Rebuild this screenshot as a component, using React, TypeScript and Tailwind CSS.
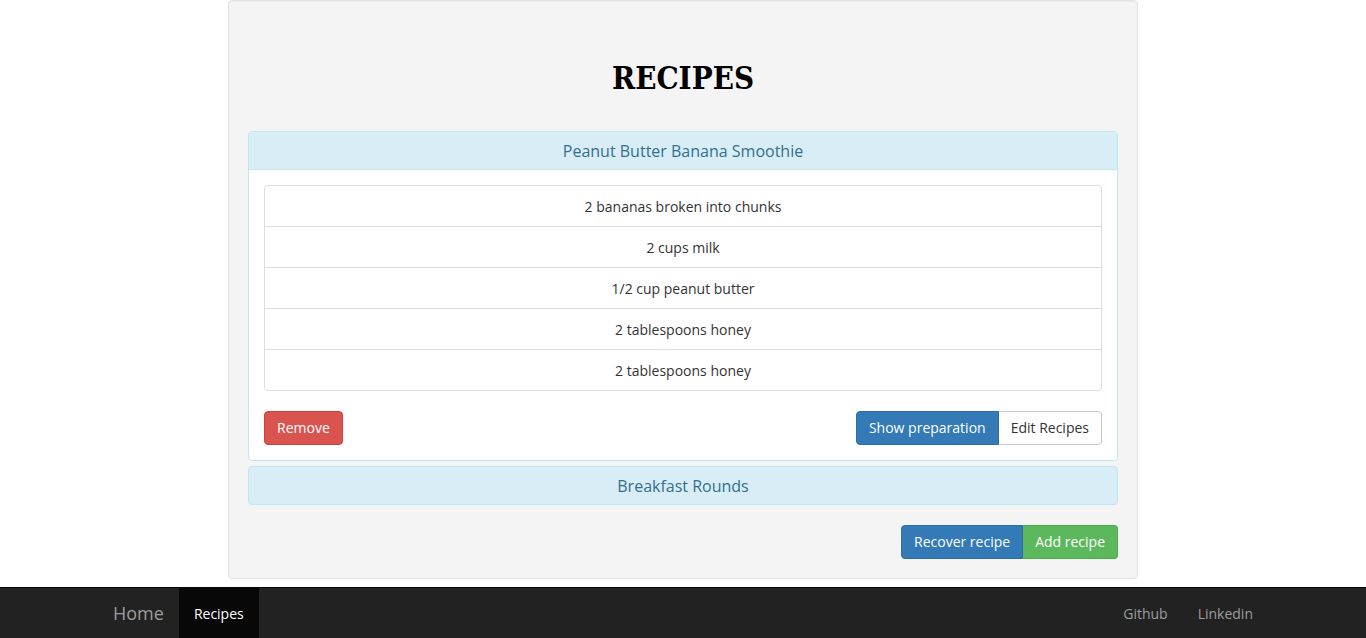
import React from 'react';

const ingredients = [
  '2 bananas broken into chunks',
  '2 cups milk',
  '1/2 cup peanut butter',
  '2 tablespoons honey',
  '2 tablespoons honey',
];

const btn = 'inline-flex items-center h-[34px] px-[12px] text-[14px] leading-[20px] border';

export default function App() {
  return (
    <div className="min-h-[638px] bg-white font-['Open_Sans',sans-serif] text-[14px] text-[#333] flex flex-col">
      <div className="w-[910px] mx-auto mb-[8px] bg-[#f4f4f4] border border-[#e3e3e3] rounded-[4px] p-[19px] shadow-[inset_0_1px_1px_rgba(0,0,0,0.05)]">
        <h1 className="mt-[38px] mb-[33px] h-[40px] leading-[40px] text-center text-[31px] font-bold text-black font-['DejaVu_Serif_Condensed','DejaVu_Serif',serif]">
          RECIPES
        </h1>

        <div className="bg-white border border-[#bce8f1] rounded-[4px]">
          <div className="bg-[#d9edf7] border-b border-[#bce8f1] rounded-t-[3px] h-[38px] flex items-center justify-center text-[16px] text-[#31708f]">
            Peanut Butter Banana Smoothie
          </div>
          <div className="p-[15px]">
            <div className="border border-[#ddd] rounded-[4px]">
              {ingredients.map((item, i) => (
                <div
                  key={i}
                  className={`flex items-center justify-center ${i > 0 ? 'h-[41px] border-t border-[#ddd]' : 'h-[40px]'}`}
                >
                  {item}
                </div>
              ))}
            </div>
            <div className="mt-[20px] flex justify-between">
              <button className={`${btn} rounded-[4px] bg-[#d9534f] border-[#d43f3a] text-white`}>Remove</button>
              <div className="flex">
                <button className={`${btn} rounded-l-[4px] bg-[#337ab7] border-[#2e6da4] text-white`}>Show preparation</button>
                <button className={`${btn} rounded-r-[4px] bg-white border-[#ccc] border-l-0 text-[#333]`}>Edit Recipes</button>
              </div>
            </div>
          </div>
        </div>

        <div className="mt-[5px] bg-[#d9edf7] border border-[#bce8f1] rounded-[4px] h-[39px] flex items-center justify-center text-[16px] text-[#31708f]">
          Breakfast Rounds
        </div>

        <div className="mt-[20px] flex justify-end">
          <button className={`${btn} rounded-l-[4px] bg-[#337ab7] border-[#2e6da4] text-white`}>Recover recipe</button>
          <button className={`${btn} rounded-r-[4px] bg-[#5cb85c] border-[#4cae4c] border-l-0 text-white`}>Add recipe</button>
        </div>
      </div>

      <nav className="h-[51px] bg-[#222] border-t border-[#080808]">
        <div className="w-[1170px] mx-auto px-[15px] h-[50px] flex items-center">
          <a className="text-[18px] text-[#9d9d9d] pr-[15px] h-[50px] flex items-center">Home</a>
          <a className="h-[50px] px-[15px] flex items-center bg-[#080808] text-white">Recipes</a>
          <div className="ml-auto flex h-[50px]">
            <a className="px-[15px] flex items-center text-[#9d9d9d]">Github</a>
            <a className="pl-[15px] flex items-center text-[#9d9d9d]">Linkedin</a>
          </div>
        </div>
      </nav>
    </div>
  );
}
